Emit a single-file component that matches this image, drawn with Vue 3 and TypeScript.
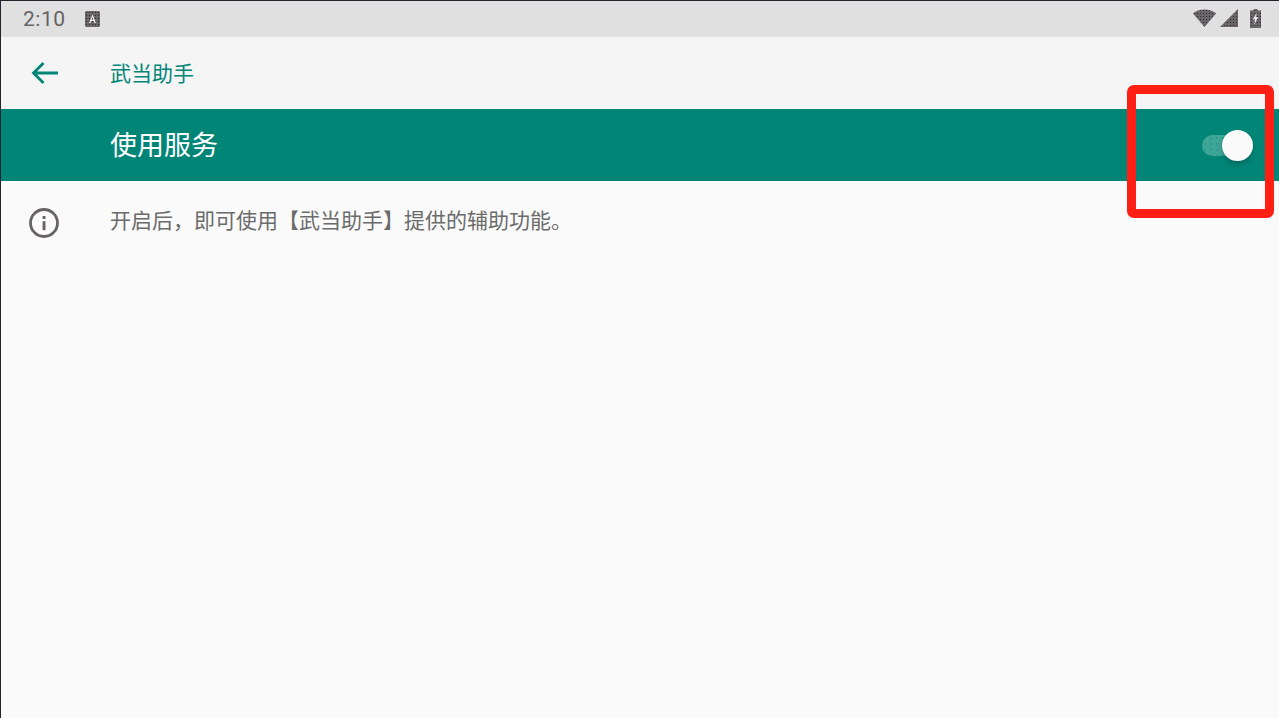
<script setup lang="ts">
const title = '武当助手'
const service = '使用服务'
const hint = '开启后\uFF0C即可使用【武当助手】提供的辅助功能。'
</script>

<template>
  <div class="screen">
    <div class="status">
      <span class="time">2:10</span>
      <svg class="a-icon" width="15" height="16" viewBox="0 0 15 16">
        <defs>
          <pattern id="dots" width="3" height="3" patternUnits="userSpaceOnUse">
            <rect width="3" height="3" fill="#6a6668" />
            <rect x="1" y="1" width="1" height="1" fill="#2b2a33" />
          </pattern>
        </defs>
        <rect width="15" height="16" rx="1.5" fill="url(#dots)" />
        <path d="M7.5 3.5 L11 12 H9.5 L8.8 10 H6.2 L5.5 12 H4 Z M6.7 8.7 H8.3 L7.5 6.3 Z" fill="#eeeeee" fill-rule="evenodd" />
      </svg>
      <span class="spacer"></span>
      <svg class="wifi" width="23" height="18" viewBox="0 0 23 18">
        <path d="M0 4.5 C5 -1 18 -1 23 4.5 L11.5 18 Z" fill="url(#dots)" />
      </svg>
      <svg class="signal" width="18" height="18" viewBox="0 0 18 18">
        <path d="M18 0 V18 H0 Z" fill="url(#dots)" />
      </svg>
      <svg class="battery" width="11" height="19" viewBox="0 0 11 19">
        <path d="M3.5 0 H7.5 V1.5 H11 V19 H0 V1.5 H3.5 Z" fill="url(#dots)" />
        <path d="M6.8 3.5 L2.8 10.5 H5 L4.2 16 L8.2 8 H6 Z" fill="#e8e8e8" />
      </svg>
    </div>

    <div class="toolbar">
      <svg class="back" width="28" height="24" viewBox="0 0 28 24">
        <path d="M27 12 H3.5 M12.5 2 L2.5 12 L12.5 22" fill="none" stroke="#008577" stroke-width="2.8" />
      </svg>
      <span class="title">{{ title }}</span>
    </div>

    <div class="banner">
      <span class="service">{{ service }}</span>
      <div class="switch">
        <div class="track"></div>
        <div class="thumb"></div>
      </div>
    </div>

    <div class="info">
      <svg class="info-icon" width="30" height="30" viewBox="0 0 30 30">
        <circle cx="15" cy="15" r="13.5" fill="none" stroke="#666365" stroke-width="2.8" />
        <rect x="13.6" y="13.2" width="2.9" height="9" fill="#666365" />
        <rect x="13.6" y="8" width="2.9" height="3" fill="#666365" />
      </svg>
      <span class="hint">{{ hint }}</span>
    </div>

    <div class="highlight"></div>
  </div>
</template>

<style>
html, body { margin: 0; padding: 0; background: #fafafa; }
</style>

<style scoped>
.screen {
  position: relative;
  width: 1279px;
  height: 718px;
  box-sizing: border-box;
  border-left: 1px solid #23232f;
  border-top: 1px solid #23232f;
  background: #fafafa;
  overflow: hidden;
  font-family: Roboto, "Noto Sans CJK SC", sans-serif;
}
.status {
  height: 36px;
  background: #e0e0e0;
  display: flex;
  align-items: center;
  padding: 0 18px 0 22px;
  box-sizing: border-box;
}
.time {
  font-size: 21px;
  color: #666365;
  letter-spacing: 0.5px;
}
.a-icon { margin-left: 19px; }
.spacer { flex: 1; }
.wifi { margin: 0 4px 2px 0; }
.signal { margin: 0 12px 2px 0; }
.battery { margin-bottom: 2px; }
.toolbar {
  height: 72px;
  background: #f5f5f5;
  display: flex;
  align-items: center;
  padding-left: 30px;
}
.back { flex: none; }
.title {
  margin-left: 51px;
  padding-bottom: 2px;
  font-size: 21px;
  color: #008577;
}
.banner {
  height: 72px;
  background: #008577;
  display: flex;
  align-items: center;
  justify-content: space-between;
  padding-left: 109px;
  padding-right: 26px;
}
.service {
  padding-bottom: 4px;
  font-size: 27px;
  color: #ffffff;
}
.switch {
  position: relative;
  width: 51px;
  height: 31px;
}
.track {
  position: absolute;
  left: 0;
  top: 5px;
  width: 44px;
  height: 21px;
  border-radius: 11px;
  background-color: #3fa597;
  background-image: radial-gradient(#2a9a8b 0.7px, transparent 0.9px);
  background-size: 6px 6px;
}
.thumb {
  position: absolute;
  right: 0;
  top: 0;
  width: 31px;
  height: 31px;
  border-radius: 50%;
  background: #fafafa;
  box-shadow: 0 3px 5px rgba(0, 0, 0, 0.22);
}
.info {
  display: flex;
  align-items: center;
  height: 30px;
  margin-top: 27px;
  padding-left: 28px;
}
.info-icon { flex: none; }
.hint {
  margin-left: 51px;
  padding-bottom: 9px;
  font-size: 21px;
  color: #6b6b6b;
}
.highlight {
  position: absolute;
  left: 1126px;
  top: 84px;
  width: 147px;
  height: 133px;
  box-sizing: border-box;
  border: 9px solid #ff1f14;
  border-radius: 7px;
}
</style>
